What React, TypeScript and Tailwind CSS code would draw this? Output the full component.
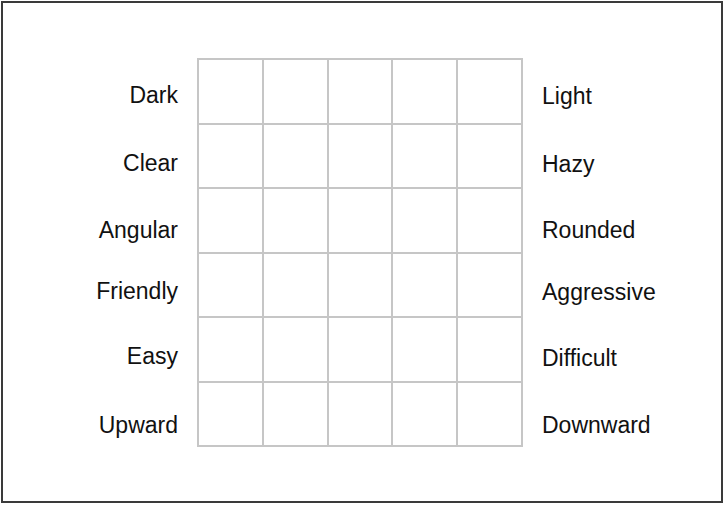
import React from "react";

const left = ["Dark", "Clear", "Angular", "Friendly", "Easy", "Upward"];
const right = ["Light", "Hazy", "Rounded", "Aggressive", "Difficult", "Downward"];
const leftPad = ["pt-[26px]", "pt-[29px]", "pt-[31px]", "pt-[28px]", "pt-[28px]", "pt-[32px]"];
const rightPad = ["pt-[27px]", "pt-[30px]", "pt-[31px]", "pt-[29px]", "pt-[30px]", "pt-[32px]"];

export default function App() {
  return (
    <div className="w-[725px] h-[505px] bg-white pt-[1px] pl-[1px]" style={{ fontFamily: '"Liberation Sans", Arial, sans-serif' }}>
      <div className="w-[722px] h-[502px] border-2 border-[#3a3a3a] pt-[55px]">
        <div className="flex">
          <div className="w-[175px] flex flex-col items-end">
            {left.map((t, i) => (
              <div key={t} className={`h-[64.83px] ${leftPad[i]} text-[23px] leading-[23px] text-[#111]`}>
                {t}
              </div>
            ))}
          </div>
          <div className="ml-[19px] w-[326px] h-[389px] bg-[#c6c6c6] p-[2px] grid grid-cols-5 grid-rows-6 gap-[2px]">
            {Array.from({ length: 30 }).map((_, i) => (
              <div key={i} className="bg-white" />
            ))}
          </div>
          <div className="ml-[19px] flex flex-col items-start">
            {right.map((t, i) => (
              <div key={t} className={`h-[64.83px] ${rightPad[i]} text-[23px] leading-[23px] text-[#111]`}>
                {t}
              </div>
            ))}
          </div>
        </div>
      </div>
    </div>
  );
}
